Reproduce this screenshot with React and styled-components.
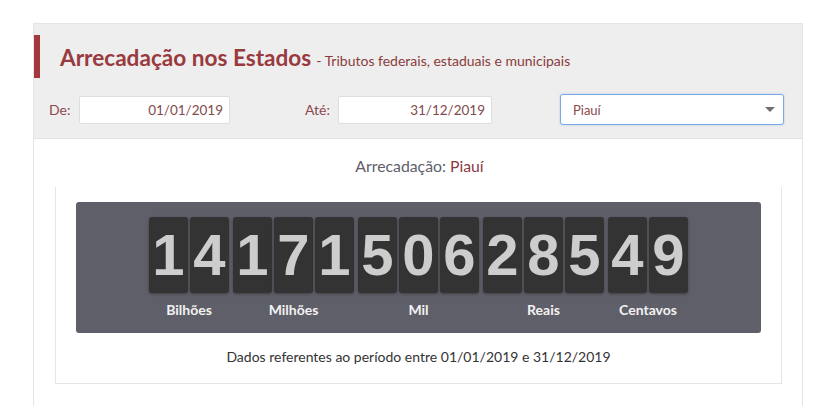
import React from "react";
import styled, { createGlobalStyle } from "styled-components";

const Global = createGlobalStyle`
  html, body { margin: 0; padding: 0; background: #ffffff; }
  body { font-family: Lato, "Open Sans", sans-serif; }
  * { box-sizing: border-box; }
`;

const Page = styled.div`
  padding: 23px 0 0 33px;
  height: 406px;
  overflow: hidden;
`;

const Panel = styled.div`
  width: 770px;
  height: 400px;
  border: 1px solid #e4e4e4;
  border-bottom: none;
`;

const Header = styled.div`
  background: #eeeeee;
  border-bottom: 1px solid #e2e2e2;
  padding: 11px 0 13px 0;
`;

const TitleRow = styled.div`
  display: flex;
  align-items: center;
  height: 43px;
  border-left: 6px solid #a3383e;
  padding-left: 20px;
`;

const Title = styled.h1`
  margin: 0;
  font-family: Lato, sans-serif;
  font-weight: 700;
  font-size: 22.6px;
  color: #993a3e;
  padding-top: 1px;
`;

const Subtitle = styled.span`
  font-weight: 400;
  font-size: 14px;
  color: #8a3c3c;
  margin-left: 5px;
`;

const FilterRow = styled.div`
  display: flex;
  align-items: center;
  margin-top: 16px;
  padding-left: 15px;
`;

const Label = styled.label`
  font-size: 14px;
  color: #8b4a4d;
  width: ${(p) => p.$w}px;
  margin-left: ${(p) => p.$ml || 0}px;
`;

const DateInput = styled.div`
  width: ${(p) => p.$w}px;
  height: 28px;
  background: #ffffff;
  border: 1px solid #dedede;
  border-radius: 2px;
  display: flex;
  align-items: center;
  justify-content: flex-end;
  padding-right: 6px;
  font-size: 13.5px;
  color: #7f4a4c;
`;

const Select = styled.div`
  margin-left: 68px;
  width: 224px;
  height: 31px;
  background: #ffffff;
  border: 1px solid #7ba7e2;
  border-radius: 3px;
  box-shadow: 0 0 2px rgba(102, 155, 230, 0.5);
  display: flex;
  align-items: center;
  justify-content: space-between;
  padding: 0 8px 0 12px;
  font-size: 13px;
  color: #8b4a4d;
`;

const Caret = styled.span`
  width: 0;
  height: 0;
  border-left: 5px solid transparent;
  border-right: 5px solid transparent;
  border-top: 5px solid #6f6f6f;
`;

const Body = styled.div`
  padding: 17px 20px 0 21px;
`;

const Caption = styled.div`
  text-align: center;
  font-size: 15.8px;
  color: #5e5e6a;
  margin-left: 2px;
`;

const Place = styled.span`
  color: #8b3a3f;
`;

const Box = styled.div`
  margin-top: 12px;
  border: 1px solid #e6e6e6;
  border-top: none;
  padding: 15px 20px 0 20px;
  height: 197px;
`;

const Counter = styled.div`
  background: #5f5f69;
  border-radius: 3px;
  height: 131px;
  padding-top: 15px;
  display: flex;
  justify-content: center;
  gap: 4px;
`;

const Group = styled.div`
  display: flex;
  flex-direction: column;
  align-items: center;
`;

const Cards = styled.div`
  display: flex;
  gap: 2px;
`;

const Card = styled.div`
  width: 39px;
  height: 76px;
  background: #333334;
  border-radius: 3px;
  box-shadow: 0 1px 3px rgba(0, 0, 0, 0.35);
  display: flex;
  align-items: center;
  justify-content: center;
  font-family: "Liberation Sans", Arial, sans-serif;
  font-weight: 700;
  font-size: 58px;
  color: #cdcdcd;
  line-height: 1;
`;

const GroupLabel = styled.div`
  margin-top: 8px;
  font-family: Lato, sans-serif;
  font-weight: 700;
  font-size: 14px;
  color: #f2f2f2;
`;

const Footnote = styled.div`
  text-align: center;
  font-size: 14px;
  color: #333333;
  margin-top: 15px;
`;

const groups = [
  { digits: "14", label: "Bilhões" },
  { digits: "171", label: "Milhões" },
  { digits: "506", label: "Mil" },
  { digits: "285", label: "Reais" },
  { digits: "49", label: "Centavos" },
];

export default function App() {
  return (
    <>
      <Global />
      <Page>
        <Panel>
          <Header>
            <TitleRow>
              <Title>
                Arrecadação nos Estados
                <Subtitle>- Tributos federais, estaduais e municipais</Subtitle>
              </Title>
            </TitleRow>
            <FilterRow>
              <Label $w={30}>De:</Label>
              <DateInput $w={151}>01/01/2019</DateInput>
              <Label $w={33} $ml={75}>Até:</Label>
              <DateInput $w={154}>31/12/2019</DateInput>
              <Select>
                Piauí
                <Caret />
              </Select>
            </FilterRow>
          </Header>
          <Body>
            <Caption>
              Arrecadação: <Place>Piauí</Place>
            </Caption>
            <Box>
              <Counter>
                {groups.map((g) => (
                  <Group key={g.label}>
                    <Cards>
                      {g.digits.split("").map((d, i) => (
                        <Card key={i}>{d}</Card>
                      ))}
                    </Cards>
                    <GroupLabel>{g.label}</GroupLabel>
                  </Group>
                ))}
              </Counter>
              <Footnote>
                Dados referentes ao período entre 01/01/2019 e 31/12/2019
              </Footnote>
            </Box>
          </Body>
        </Panel>
      </Page>
    </>
  );
}
